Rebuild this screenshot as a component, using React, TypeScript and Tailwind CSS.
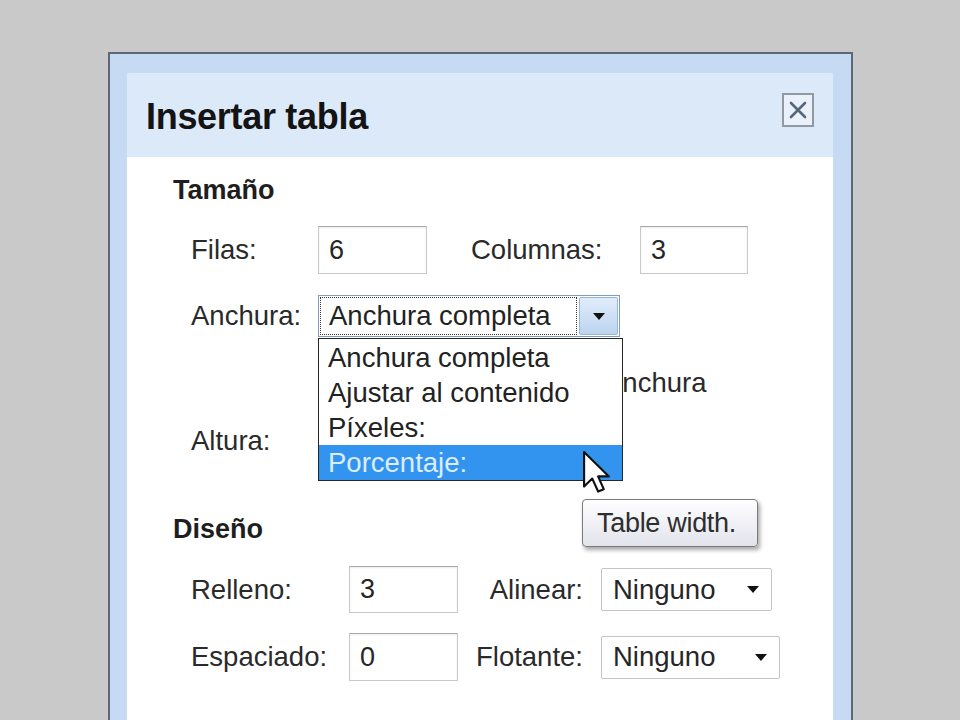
import React from "react";

const font = { fontFamily: '"Liberation Sans", Arial, sans-serif' };

function Caret({ className = "" }: { className?: string }) {
  return (
    <svg viewBox="0 0 12 7" className={className} width="12" height="7">
      <path d="M0 0 L12 0 L6 7 Z" fill="#111" />
    </svg>
  );
}

function TextBox({ value, w, h = "h-[48px]" }: { value: string; w: string; h?: string }) {
  return (
    <div
      className={`${w} ${h} flex items-center pl-[10px] border border-[#c9c9c9] border-t-[#a9a9a9] bg-white text-[27px] text-[#262626] shadow-[inset_0_1px_2px_rgba(0,0,0,0.08)]`}
    >
      {value}
    </div>
  );
}

function PlainSelect({ value, w }: { value: string; w: string }) {
  return (
    <div
      className={`${w} h-[43px] flex items-center justify-between pl-[11px] pr-[12px] border border-[#c4c4c4] rounded-[2px] bg-white text-[27.5px] text-[#262626]`}
    >
      <span>{value}</span>
      <Caret />
    </div>
  );
}

function Cursor() {
  return (
    <svg viewBox="0 0 12.5 19.5" width="27" height="44" className="absolute left-[264px] top-[111px]">
      <path
        d="M0.5 0.5 L0.5 16.5 L4.3 12.8 L7 18.8 L9.6 17.7 L7 11.8 L12 11.8 Z"
        fill="#fff"
        stroke="#111"
        strokeWidth="1"
        strokeLinejoin="round"
      />
    </svg>
  );
}

export default function App() {
  const items = ["Anchura completa", "Ajustar al contenido", "Píxeles:", "Porcentaje:"];

  return (
    <div className="w-full h-[720px] overflow-hidden bg-[#c9c9c9]" style={font}>
      <div className="pl-[108px] pt-[52px]">
        <div className="w-[745px] h-[700px] border-2 border-b-0 border-[#5a6879] bg-[#c6daf3] pt-[19px] pl-[17px] pr-[18px]">
          <div className="h-full flex flex-col">
            {/* title bar */}
            <div className="h-[84px] bg-[#dce9f8] flex justify-between pl-[19px] pr-[19px]">
              <h1 className="mt-[24px] text-[36px] leading-[40px] font-bold text-[#141414] tracking-[-0.3px]">
                Insertar tabla
              </h1>
              <div className="mt-[20px] w-[32px] h-[34px] border-2 border-[#8f98a3] bg-[#eaf1fb] flex items-center justify-center">
                <svg viewBox="0 0 20 20" width="20" height="20">
                  <path d="M3 3 L17 17 M17 3 L3 17" stroke="#56677d" strokeWidth="2.6" strokeLinecap="round" />
                </svg>
              </div>
            </div>

            {/* body */}
            <div className="flex-1 bg-white pl-[46px] pt-[17px] text-[27.5px] text-[#2a2a2a]">
              <h2 className="h-[32px] leading-[32px] font-bold text-[#1e1e1e] text-[27px]">Tamaño</h2>

              <div className="pl-[18px]">
                <div className="mt-[20px] flex items-center">
                  <span className="w-[127px]">Filas:</span>
                  <TextBox value="6" w="w-[109px]" />
                  <span className="ml-[44px] w-[169px]">Columnas:</span>
                  <TextBox value="3" w="w-[108px]" />
                </div>

                <div className="mt-[21px] flex items-center">
                  <span className="w-[127px]">Anchura:</span>
                  <div className="relative w-[302px] h-[42px] border border-[#7f9db9] bg-white flex items-center p-[1px]">
                    <div className="flex-1 h-full border border-dotted border-[#333] flex items-center pl-[8px] text-[#222]">
                      Anchura completa
                    </div>
                    <div className="ml-[2px] w-[39px] h-full rounded-[2px] border border-[#98b5da] bg-gradient-to-b from-[#e1ecfa] to-[#bcd4f1] flex items-center justify-center">
                      <Caret />
                    </div>

                    {/* open list */}
                    <div className="absolute left-[-1px] top-[42px] w-[305px] h-[143px] border border-[#262626] bg-white pt-[1px] z-10">
                      {items.map((it, i) => (
                        <div
                          key={it}
                          className={
                            i === 3
                              ? "h-[35px] flex items-center pl-[9px] bg-[#3394f0] text-[#dcedff]"
                              : "h-[35px] flex items-center pl-[9px] text-[#222]"
                          }
                        >
                          {it}
                        </div>
                      ))}
                      <div className="absolute left-[263px] top-[160px] w-[176px] h-[48px] rounded-[4px] border border-[#7a7a7a] bg-gradient-to-b from-white to-[#e2e3ec] shadow-[2px_3px_4px_rgba(0,0,0,0.35)] flex items-center pl-[14px] text-[27px] text-[#2e2e2e] tracking-[-0.3px] whitespace-nowrap">
                        Table width.
                      </div>
                      <Cursor />
                    </div>
                  </div>
                </div>

                <div className="mt-[26px] h-[40px] flex items-center">
                  <span className="ml-[413px]">Anchura</span>
                </div>

                <div className="mt-[18px] h-[40px] flex items-center">
                  <span>Altura:</span>
                </div>
              </div>

              <h2 className="mt-[52px] h-[32px] leading-[32px] font-bold text-[#1e1e1e] text-[27px]">Diseño</h2>

              <div className="pl-[18px]">
                <div className="mt-[21px] flex items-center">
                  <span className="w-[158px]">Relleno:</span>
                  <TextBox value="3" w="w-[109px]" h="h-[47px]" />
                  <span className="w-[143px] text-right pr-[18px]">Alinear:</span>
                  <PlainSelect value="Ninguno" w="w-[171px]" />
                </div>
                <div className="mt-[20px] flex items-center">
                  <span className="w-[158px]">Espaciado:</span>
                  <TextBox value="0" w="w-[109px]" />
                  <span className="w-[143px] text-right pr-[18px]">Flotante:</span>
                  <PlainSelect value="Ninguno" w="w-[179px]" />
                </div>
              </div>
            </div>
          </div>
        </div>
      </div>
    </div>
  );
}
